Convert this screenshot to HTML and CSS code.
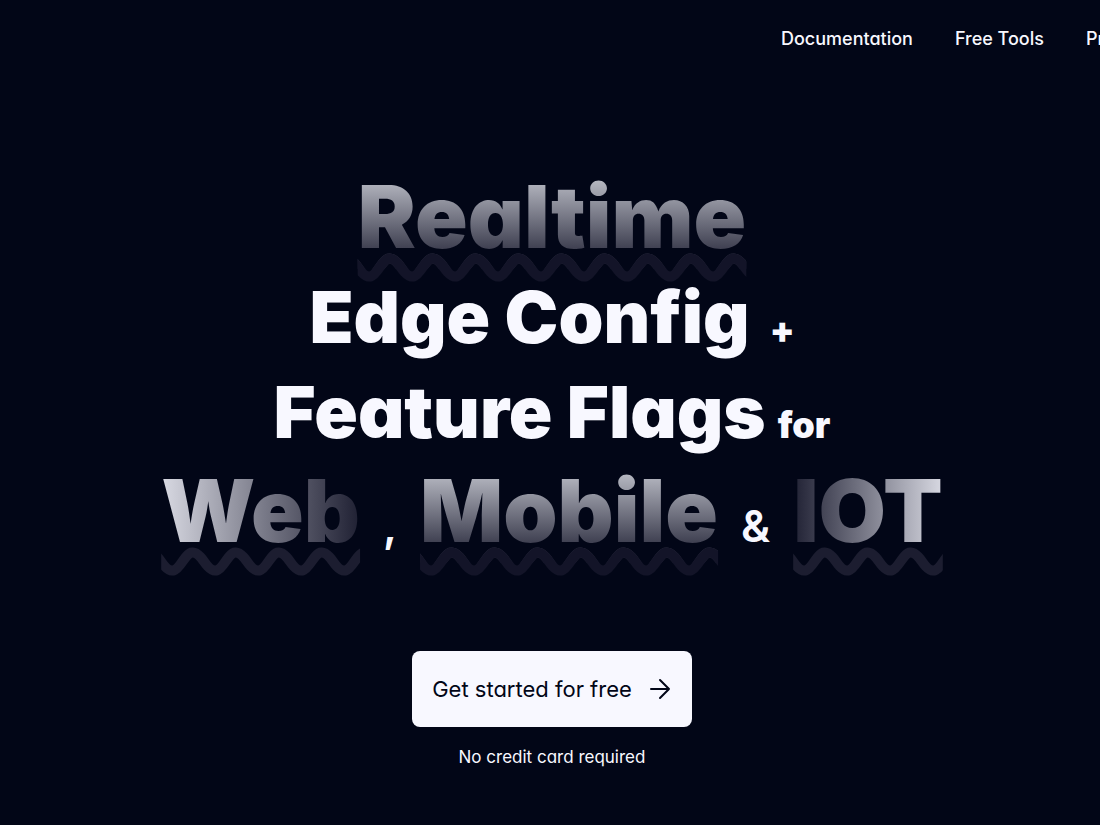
FILE: index.html
```html
<!DOCTYPE html>
<html lang="en">
<head>
    <meta charset="UTF-8">
    <meta name="viewport" content="width=device-width, initial-scale=1.0">
    <title>Realtime Edge Config + Feature Flags</title>
    <link rel="stylesheet" href="styles.css">
</head>
<body>
    <header class="header">
        <nav class="nav">
            <a href="#docs">Documentation</a>
            <a href="#tools">Free Tools</a>
            <a href="#pricing">Pricing</a>
        </nav>
    </header>

    <main class="hero">
        <h1 class="title">
            <span class="line line-lg"><span class="word fade-down">Realtime</span></span>
            <span class="line">Edge Config <span class="small plus">+</span></span>
            <span class="line">Feature Flags <span class="small">for</span></span>
            <span class="line line-lg spread">
                <span class="word fade-right">Web</span>
                <span class="joiner">,</span>
                <span class="word fade-down">Mobile</span>
                <span class="joiner">&amp;</span>
                <span class="word fade-left">IOT</span>
            </span>
        </h1>

        <a class="cta" href="#start">
            Get started for free
            <svg width="24" height="24" viewBox="0 0 24 24" fill="none" stroke="currentColor" stroke-width="2" stroke-linecap="round" stroke-linejoin="round" aria-hidden="true">
                <path d="M3 12h18M12 3l9 9-9 9"/>
            </svg>
        </a>
        <p class="note">No credit card required</p>
    </main>
</body>
</html>
```

FILE: styles.css
```css
* {
    box-sizing: border-box;
}
body {
    margin: 0;
    min-height: 100vh;
    background: #020617;
    color: #f8f8ff;
    font-family: Inter, "Open Sans", sans-serif;
    font-feature-settings: "cv11";
    overflow-x: hidden;
}
a {
    color: inherit;
    text-decoration: none;
}

/* top bar */
.header {
    overflow: hidden;
    padding: 27px 0;
}
.nav {
    display: flex;
    gap: 42px;
    margin-left: 71%;
    font-size: 18px;
    font-weight: 500;
    line-height: 24px;
    white-space: nowrap;
}

/* hero */
.hero {
    display: flex;
    flex-direction: column;
    align-items: center;
    padding: 87px 0 48px 4px;
}
.title {
    margin: 0;
    font-size: 72px;
    font-weight: 900;
    line-height: 95px;
}
.line {
    display: flex;
    justify-content: center;
    align-items: baseline;
    gap: 12px;
    height: 95px;
    white-space: nowrap;
}
.line-lg {
    height: 104px;
    line-height: 104px;
}
.spread {
    gap: 20px;
}
.small {
    font-size: 36px;
}
.plus {
    margin-left: 8px;
}
.joiner {
    font-size: 44px;
    font-weight: 600;
}
.word {
    font-size: 87px;
    padding: 0 3px;
    color: transparent;
    background-clip: text;
    -webkit-background-clip: text;
    background-repeat: no-repeat;
    text-decoration: underline wavy #1c1d30 10px;
    text-underline-offset: 8px;
    text-decoration-skip-ink: none;
}
.fade-down {
    background-image: linear-gradient(to bottom, #d0d2da, #1c1d30);
    text-decoration-color: #131428;
}
/* the side fades stop above the underline */
.fade-right {
    background-image: linear-gradient(to right, #dcdde6, #1c1d30);
    background-size: 100% 86px;
}
.fade-left {
    background-image: linear-gradient(to left, #dcdde6, #1c1d30);
    background-size: 100% 86px;
}

/* call to action */
.cta {
    display: flex;
    align-items: center;
    gap: 16px;
    margin-top: 88px;
    padding: 22px 20px;
    border-radius: 8px;
    background: #f8f8ff;
    color: #020617;
    font-size: 22px;
    line-height: 32px;
}
.note {
    margin: 18px 0 0;
    font-size: 17px;
    line-height: 24px;
}
```
